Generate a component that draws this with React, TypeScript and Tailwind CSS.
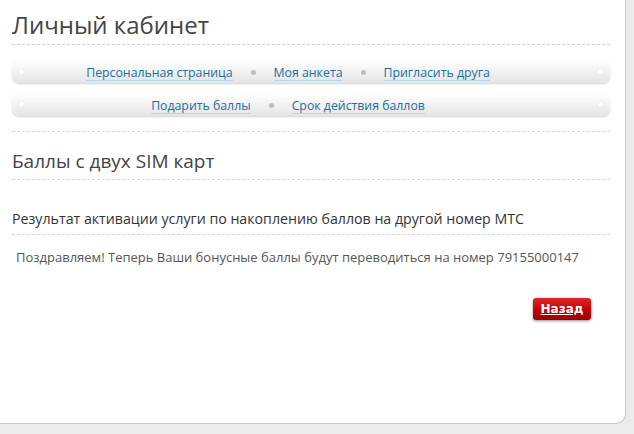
import React from 'react'

const topLinks = ['Персональная страница', 'Моя анкета', 'Пригласить друга']
const bottomLinks = ['Подарить баллы', 'Срок действия баллов']

function NavBar({ links }: { links: string[] }) {
  return (
    <div className="relative h-[22px] rounded-[7px] bg-gradient-to-b from-white to-[#e4e4e4] shadow-[0_1px_2px_rgba(0,0,0,0.18)] flex items-center justify-center pr-[46px]">
      {/* точки по краям */}
      <span className="absolute left-[7px] top-[8px] w-[5px] h-[5px] rounded-full bg-white shadow-[0_0_1px_rgba(0,0,0,0.15)]" />
      <span className="absolute right-[7px] top-[8px] w-[5px] h-[5px] rounded-full bg-white shadow-[0_0_1px_rgba(0,0,0,0.15)]" />
      <div className="flex items-center gap-[18px] pt-[1px]">
        {links.map((label, i) => (
          <React.Fragment key={label}>
            {i > 0 && <span className="w-[5px] h-[5px] rounded-full bg-[#bdbdbd]" />}
            <a href="#" className="text-[12.3px] leading-[15px] text-[#1a6fa3] border-b border-[#b3d7ea]">
              {label}
            </a>
          </React.Fragment>
        ))}
      </div>
    </div>
  )
}

export default function App() {
  return (
    <div className="w-[634px] h-[434px] bg-[#ebebeb] overflow-hidden" style={{ fontFamily: '"Open Sans", sans-serif' }}>
      <div className="w-[626px] h-[424px] bg-white rounded-br-[10px] border-r border-b border-[#c6c6c6] pl-3 pr-[15px]">
        {/* заголовок */}
        <h1 className="pt-[11px] pb-[5px] text-[24px] leading-[28px] text-[#444] border-b border-dashed border-[#cfcfcf]">
          Личный кабинет
        </h1>

        <div className="pt-[16px] flex flex-col gap-[11px]">
          <NavBar links={topLinks} />
          <NavBar links={bottomLinks} />
        </div>

        <div className="mt-[15px] border-t border-dashed border-[#d6d6d6]" />

        <h2 className="pt-[17px] pb-[6px] text-[19px] leading-[24px] text-[#444] border-b border-dashed border-[#d6d6d6]">
          Баллы с двух SIM карт
        </h2>

        <h3 className="pt-[29px] pb-[5px] text-[14.2px] leading-[20px] text-[#333] border-b border-dashed border-[#d6d6d6]">
          Результат активации услуги по накоплению баллов на другой номер МТС
        </h3>

        <p className="pt-[13px] pl-1 text-[13px] leading-[18px] text-[#555]">
          Поздравляем! Теперь Ваши бонусные баллы будут переводиться на номер 79155000147
        </p>

        <div className="flex justify-end pt-[32px] pr-[19px]">
          <button className="w-[58px] h-[22px] rounded-[3px] bg-gradient-to-b from-[#e0242a] via-[#c40008] to-[#9e0005] shadow-[0_1px_3px_rgba(0,0,0,0.45)] text-white text-[12px] font-bold underline leading-none" style={{ fontFamily: '"DejaVu Sans", sans-serif' }}>
            Назад
          </button>
        </div>
      </div>
    </div>
  )
}
